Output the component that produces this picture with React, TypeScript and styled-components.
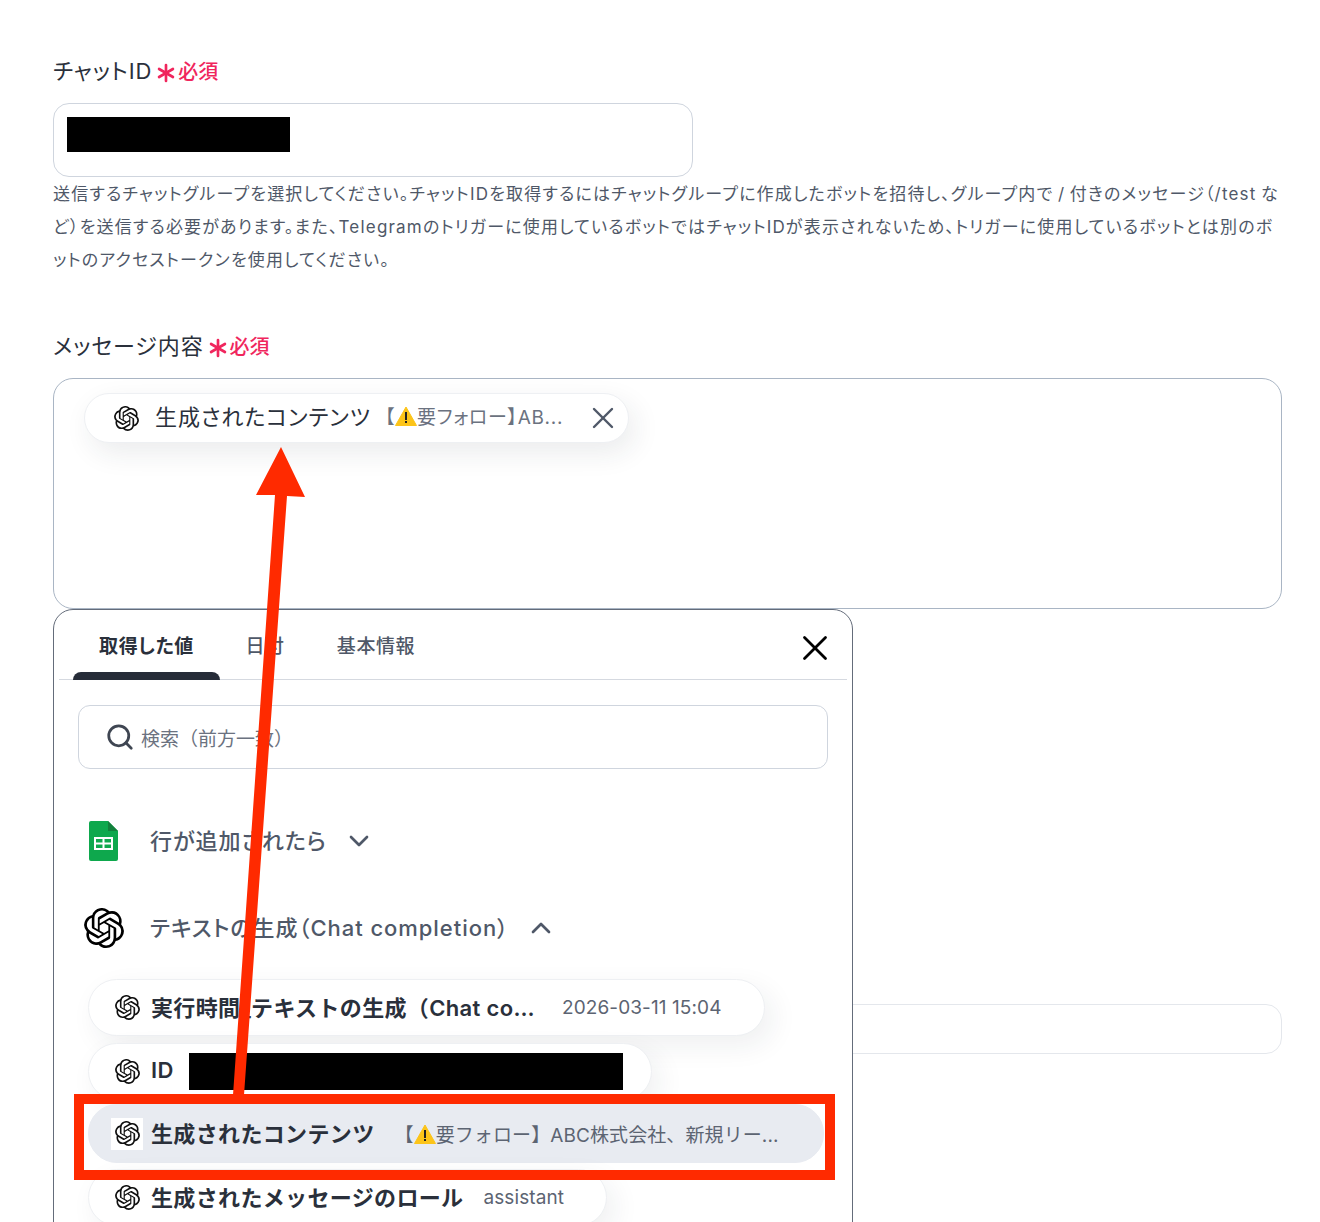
import React from "react";
import styled, { createGlobalStyle } from "styled-components";
import { SiOpenai } from "react-icons/si";
import { Asterisk, ChevronDown, ChevronUp, Search, X } from "lucide-react";

const GlobalStyle = createGlobalStyle`
  html, body {
    margin: 0;
    height: 100%;
    overflow: hidden;
    background: #fff;
  }
  body {
    font-family: Inter, "Noto Sans CJK JP", sans-serif;
    font-feature-settings: "palt";
    color: #2a303b;
  }
`;

const Page = styled.div`
  position: relative;
  width: 1320px;
  height: 1222px;
  padding: 58px 38px 0 53px;
  box-sizing: border-box;
  overflow: hidden;
`;

const Label = styled.div`
  display: flex;
  align-items: center;
  box-sizing: border-box;
  height: 28px;
  padding-bottom: 2px;
  font-size: 22px;
  line-height: 26px;
  letter-spacing: 0.9px;
  color: #2a303b;
`;

const Required = styled.span`
  display: flex;
  align-items: center;
  margin: 2px 0 0 3px;
  font-size: 20px;
  font-weight: 500;
  letter-spacing: 0;
  color: #f0265d;
  svg {
    margin: 2px -4px 0 -5px;
  }
`;

const InputBox = styled.div`
  box-sizing: border-box;
  width: 640px;
  height: 74px;
  margin-top: 17px;
  padding: 13px;
  border: 1px solid #cfd5de;
  border-radius: 16px;
`;

const Redacted = styled.div<{ $w: number; $h: number }>`
  flex: none;
  width: ${(p) => p.$w}px;
  height: ${(p) => p.$h}px;
  background: #000;
`;

const Help = styled.p`
  margin: 0;
  padding-top: 1px;
  font-size: 17px;
  line-height: 33px;
  letter-spacing: 1.19px;
  word-spacing: -1.5px;
  color: #4f5868;
`;

const SecondLabel = styled(Label)`
  margin-top: 56px;
`;

const MessageBox = styled.div`
  display: flex;
  align-items: flex-start;
  box-sizing: border-box;
  height: 231px;
  margin-top: 17px;
  padding: 14px 30px;
  border: 1px solid #a9b5c4;
  border-radius: 20px;
`;

const ValueChip = styled.div`
  display: flex;
  align-items: center;
  box-sizing: border-box;
  width: 545px;
  height: 50px;
  padding: 0 15px 0 29px;
  background: #fff;
  border: 1px solid #eef0f3;
  border-radius: 25px;
  box-shadow: 6px 10px 28px rgba(30, 40, 60, 0.09);
`;

const ChipLabel = styled.span`
  margin: 0 0 7px 16px;
  font-size: 22px;
  letter-spacing: 0.9px;
  color: #2a303b;
  white-space: nowrap;
`;

const ChipValue = styled.span`
  display: flex;
  align-items: center;
  margin: 0 0 5px 14px;
  width: 180px;
  font-size: 19px;
  letter-spacing: 0.7px;
  color: #6b7280;
  white-space: nowrap;
`;

const ChipClose = styled(X)`
  margin: 0 -8px 0 auto;
  color: #4f5868;
`;

const BackField = styled.div`
  box-sizing: border-box;
  height: 50px;
  margin-top: 395px;
  border: 1px solid #e4e7ec;
  border-radius: 16px;
`;

const Panel = styled.div`
  position: absolute;
  top: 609px;
  left: 53px;
  box-sizing: border-box;
  width: 800px;
  height: 640px;
  padding: 0 5px;
  background: #fff;
  border: 1px solid #646c7a;
  border-radius: 20px;
`;

const TabBar = styled.div`
  display: flex;
  align-items: stretch;
  box-sizing: border-box;
  height: 70px;
  padding-left: 14px;
  border-bottom: 1px solid #d5d9e0;
`;

const Tab = styled.div<{ $active?: boolean; $w: number }>`
  position: relative;
  display: flex;
  align-items: center;
  justify-content: center;
  width: ${(p) => p.$w}px;
  box-sizing: border-box;
  font-size: 19px;
  letter-spacing: 0.6px;
  font-weight: ${(p) => (p.$active ? 700 : 500)};
  color: ${(p) => (p.$active ? "#2a303b" : "#4f5868")};
  ${(p) =>
    p.$active &&
    `&::after {
      content: "";
      position: absolute;
      left: 0;
      right: 0;
      bottom: -1px;
      height: 8px;
      background: #262c38;
      border-radius: 8px 8px 0 0;
    }`}
`;

const PanelClose = styled(X)`
  margin: 17px 11px 0 auto;
  color: #000;
`;

const SearchBox = styled.div`
  display: flex;
  align-items: center;
  box-sizing: border-box;
  height: 64px;
  margin: 25px 19px 0;
  padding-left: 26px;
  border: 1px solid #cfd5de;
  border-radius: 12px;
  font-size: 19px;
  font-feature-settings: normal;
  color: #6b7280;
  svg {
    margin-right: 6px;
    color: #3f4652;
  }
`;

const GroupRow = styled.div<{ $top: number; $h: number }>`
  display: flex;
  align-items: center;
  height: ${(p) => p.$h}px;
  margin-top: ${(p) => p.$top}px;
  font-size: 22px;
  font-weight: 500;
  letter-spacing: 0.95px;
  color: #4f5868;
`;

const GroupTitle = styled.span`
  margin-bottom: 4px;
`;

const GroupIcon = styled.div`
  display: flex;
  justify-content: center;
  flex: none;
  width: 50px;
  margin-left: 20px;
  margin-right: 21px;
`;

const GroupChevron = styled.span`
  display: flex;
  margin-left: 16px;
  color: #4f5868;
`;

const ChipList = styled.div`
  display: flex;
  flex-direction: column;
  align-items: flex-start;
  gap: 6px;
  margin-top: 26px;
  padding: 0 23px 0 29px;
`;

const OutputChip = styled.div<{ $active?: boolean; $w?: number; $mt?: number }>`
  display: flex;
  align-items: center;
  box-sizing: border-box;
  width: ${(p) => (p.$w ? `${p.$w}px` : "100%")};
  height: ${(p) => (p.$active ? 59 : 57)}px;
  margin-top: ${(p) => p.$mt ?? 0}px;
  padding-left: 22px;
  flex: none;
  background: ${(p) => (p.$active ? "#e8ebf1" : "#fff")};
  border: 1px solid ${(p) => (p.$active ? "#e8ebf1" : "#eef0f3")};
  border-radius: 29px;
  box-shadow: ${(p) => (p.$active ? "none" : "8px 10px 28px rgba(30, 40, 60, 0.07)")};
`;

const IconBox = styled.span`
  display: flex;
  align-items: center;
  justify-content: center;
  flex: none;
  width: 32px;
  height: 32px;
  background: #fff;
  color: #111;
`;

const OutputName = styled.span<{ $max?: number }>`
  margin: 0 0 4px 8px;
  font-size: 22px;
  font-weight: 600;
  font-feature-settings: normal;
  color: #2a303b;
  white-space: nowrap;
  letter-spacing: 0.35px;
  ${(p) => p.$max && `max-width: ${p.$max}px; overflow: hidden; text-overflow: ellipsis;`}
`;

const OutputValue = styled.span<{ $gap: number }>`
  display: flex;
  align-items: center;
  margin-left: ${(p) => p.$gap}px;
  font-size: 19px;
  letter-spacing: 0.1px;
  font-feature-settings: normal;
  color: #5c6472;
  white-space: nowrap;
`;

const SheetsSvg = styled.svg`
  margin-left: -2px;
`;

const Annotation = styled.svg`
  position: absolute;
  top: 0;
  left: 0;
  pointer-events: none;
`;

function WarningSign() {
  return (
    <svg width="22" height="20" viewBox="0 0 22 20">
      <path d="M11 1 21.5 19.5H.5z" fill="#fcc419" stroke="#fcc419" strokeLinejoin="round" />
      <rect x="10" y="6" width="2" height="8" fill="#222" />
      <rect x="10" y="15" width="2" height="2" fill="#222" />
    </svg>
  );
}

function SheetsIcon() {
  return (
    <SheetsSvg width="29" height="40" viewBox="0 0 29 40">
      <path d="M2 0h17l10 10v28a2 2 0 0 1-2 2H2a2 2 0 0 1-2-2V2a2 2 0 0 1 2-2z" fill="#0ea84d" />
      <path d="M19 0l10 10H19z" fill="#12803c" />
      <path d="M5 16h19v13H5zM7 18v3.5h6.5V18zm8.500 0v3.500H22V18zM7 23.500V27h6.500v-3.500zm8.500 0V27H22v-3.500z" fill="#fff" fillRule="evenodd" />
    </SheetsSvg>
  );
}

export default function App() {
  return (
    <Page>
      <GlobalStyle />
      <Label>
        チャットID
        <Required>
          <Asterisk size={32} strokeWidth={2} />
          必須
        </Required>
      </Label>
      <InputBox>
        <Redacted $w={223} $h={35} />
      </InputBox>
      <Help>
        送信するチャットグループを選択してください。チャットIDを取得するにはチャットグループに作成したボットを招待し、グループ内で / 付きのメッセージ（/test など）を送信する必要があります。また、Telegramのトリガーに使用しているボットではチャットIDが表示されないため、トリガーに使用しているボットとは別のボットのアクセストークンを使用してください。
      </Help>

      <SecondLabel>
        メッセージ内容
        <Required>
          <Asterisk size={32} strokeWidth={2} />
          必須
        </Required>
      </SecondLabel>
      <MessageBox>
        <ValueChip>
          <SiOpenai size={25} color="#111" />
          <ChipLabel>生成されたコンテンツ</ChipLabel>
          <ChipValue>
            【<WarningSign />要フォロー】AB...
          </ChipValue>
          <ChipClose size={36} strokeWidth={1.6} />
        </ValueChip>
      </MessageBox>
      <BackField />

      <Panel>
        <TabBar>
          <Tab $active $w={147}>取得した値</Tab>
          <Tab $w={90}>日付</Tab>
          <Tab $w={132}>基本情報</Tab>
          <PanelClose size={42} strokeWidth={1.6} />
        </TabBar>
        <SearchBox>
          <Search size={30} strokeWidth={2.2} />
          検索（前方一致）
        </SearchBox>
        <GroupRow $top={47} $h={50}>
          <GroupIcon>
            <SheetsIcon />
          </GroupIcon>
          <GroupTitle>行が追加されたら</GroupTitle>
          <GroupChevron>
            <ChevronDown size={32} strokeWidth={2} />
          </GroupChevron>
        </GroupRow>
        <GroupRow $top={37} $h={50}>
          <GroupIcon>
            <SiOpenai size={40} color="#000" />
          </GroupIcon>
          <GroupTitle>テキストの生成（Chat completion）</GroupTitle>
          <GroupChevron>
            <ChevronUp size={32} strokeWidth={2} />
          </GroupChevron>
        </GroupRow>
        <ChipList>
          <OutputChip $w={677}>
            <IconBox><SiOpenai size={25} /></IconBox>
            <OutputName $max={384}>実行時間_テキストの生成（Chat completion）</OutputName>
            <OutputValue $gap={27}>2026-03-11 15:04</OutputValue>
          </OutputChip>
          <OutputChip $w={564} $mt={1}>
            <IconBox><SiOpenai size={25} /></IconBox>
            <OutputName>ID</OutputName>
            <OutputValue $gap={15}>
              <Redacted $w={434} $h={37} />
            </OutputValue>
          </OutputChip>
          <OutputChip $active $mt={-2}>
            <IconBox><SiOpenai size={25} /></IconBox>
            <OutputName>生成されたコンテンツ</OutputName>
            <OutputValue $gap={20}>
              【<WarningSign />要フォロー】ABC株式会社、新規リー...
            </OutputValue>
          </OutputChip>
          <OutputChip $w={519}>
            <IconBox><SiOpenai size={25} /></IconBox>
            <OutputName>生成されたメッセージのロール</OutputName>
            <OutputValue $gap={20}>assistant</OutputValue>
          </OutputChip>
        </ChipList>
      </Panel>

      <Annotation width="1320" height="1222" viewBox="0 0 1320 1222">
        <polygon points="233,1095 244,1095 287,496 305,497 281,447 256,495 275,495" fill="#ff2a00" />
        <rect x="79" y="1099" width="751" height="76" fill="none" stroke="#ff2a00" strokeWidth="10" />
      </Annotation>
    </Page>
  );
}
